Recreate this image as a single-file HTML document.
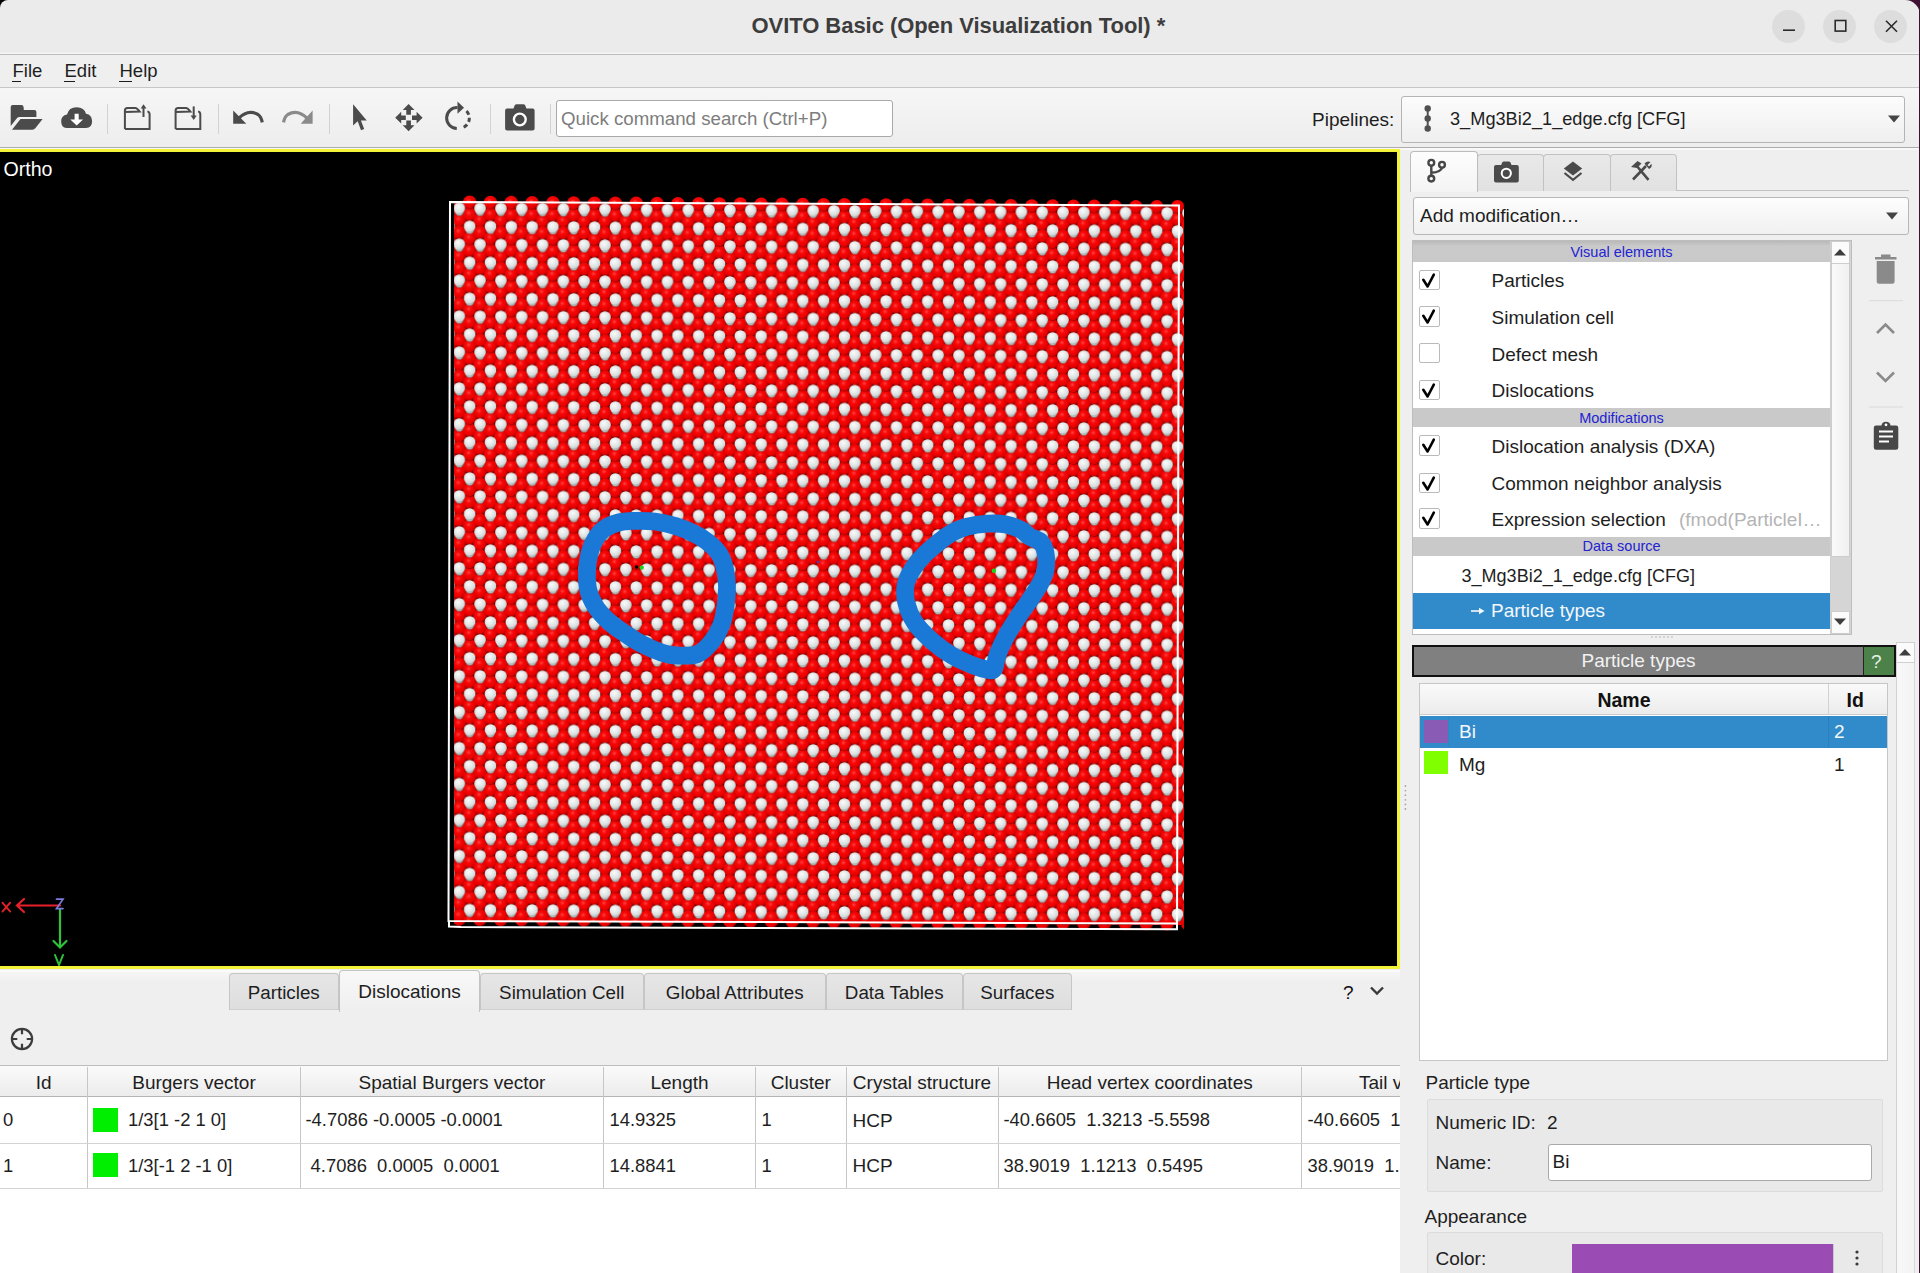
<!DOCTYPE html>
<html><head><meta charset="utf-8">
<style>
*{box-sizing:border-box;margin:0;padding:0}
html,body{width:1920px;height:1273px;overflow:hidden;background:#efefef;font-family:"Liberation Sans",sans-serif;color:#1a1a1a;font-size:19px}
.a{position:absolute}
.t{position:absolute;white-space:pre;line-height:1}
#titlebar{left:0;top:0;width:1920px;height:55px;background:#ebebeb;border-bottom:1.5px solid #bdbdbd;box-shadow:inset 0 -3px 0 -1.5px #f4f4f4}
#menubar{left:0;top:55px;width:1920px;height:33px;background:#efefef;border-bottom:1.2px solid #c6c6c6}
#toolbar{left:0;top:88px;width:1920px;height:59.5px;background:linear-gradient(#f6f6f6,#ededed);border-bottom:1.5px solid #adadad}
#viewport{left:-3px;top:149.3px;width:1403px;height:820px;background:#000;border:3px solid #f3f33a}
.wbtn{position:absolute;top:10px;width:33px;height:33px;border-radius:50%;background:#dddddd}
</style></head><body>
<!-- corners -->
<div class="a" style="left:0;top:0;width:14px;height:14px;background:#000"></div>
<div class="a" style="right:0;top:0;width:16px;height:16px;background:#3f1233"></div>
<div class="a" id="titlebar" style="border-top-left-radius:8px;border-top-right-radius:15px"></div>
<div class="t" style="left:751.5px;top:15.3px;font-size:22px;font-weight:bold;color:#3d3d3d;letter-spacing:-0.05px">OVITO Basic (Open Visualization Tool) *</div>
<div class="wbtn" style="left:1772px"></div>
<div class="wbtn" style="left:1823px"></div>
<div class="wbtn" style="left:1874px"></div>
<svg class="a" style="left:1770px;top:8px" width="140" height="40" viewBox="1770 8 140 40">
<path d="M1783,30.2 H1795" stroke="#2a2a2a" stroke-width="1.6"/>
<rect x="1835.2" y="20.5" width="10.6" height="10.6" fill="none" stroke="#2a2a2a" stroke-width="1.6"/>
<path d="M1886,20.7 L1897,31.7 M1897,20.7 L1886,31.7" stroke="#2a2a2a" stroke-width="1.6"/>
</svg>

<div class="a" id="menubar"></div>
<div class="t" style="left:12.5px;top:61.5px;font-size:18.5px;color:#1e1e1e">File</div>
<div class="t" style="left:64.5px;top:61.5px;font-size:18.5px;color:#1e1e1e">Edit</div>
<div class="t" style="left:119.5px;top:61.5px;font-size:18.5px;color:#1e1e1e">Help</div>
<div class="a" style="left:11.5px;top:80.5px;width:9px;height:1.6px;background:#1e1e1e"></div>
<div class="a" style="left:63.5px;top:80.5px;width:11px;height:1.6px;background:#1e1e1e"></div>
<div class="a" style="left:119px;top:80.5px;width:13px;height:1.6px;background:#1e1e1e"></div>
<div class="a" id="toolbar"></div>
<div class="a" style="left:0;top:147.5px;width:1920px;height:2px;background:#f8f8f8"></div>
<!--TB-->
<svg class="a" style="left:0;top:88px" width="1920" height="60" viewBox="0 88 1920 60">
<g fill="#4b4b4b">
<!-- open folder -->
<path d="M10.7,107 Q10.7,105 12.7,105 L21.5,105 Q23.3,105 23.6,107 L23.8,110 L34.4,110 Q36.4,110 36.4,112 L36.4,117 L19,117 Q17.5,117 16.7,118.5 L10.7,126 Z"/>
<path d="M20.5,119 L42.6,119 L35.5,128 Q34.2,129.7 32.3,129.7 L12,129.7 Z"/>
<!-- cloud -->
<path d="M66.5,127.9 Q61.2,127.9 61.2,121.5 Q61.2,115.5 67,114.6 Q68.7,107.2 76.7,107.2 Q84.3,107.2 86,113.8 Q92.1,114.8 92.1,121.3 Q92.1,127.9 86,127.9 Z"/>
</g>
<path d="M74.6,113.8 L78.7,113.8 L78.7,119.6 L83,119.6 L76.7,125.4 L70.3,119.6 L74.6,119.6 Z" fill="#fff"/>
<g stroke="#d2d2d2" stroke-width="1"><path d="M107.5,104 V134 M218.5,104 V134 M329.5,104 V134 M490.5,104 V134 M550.5,104 V134"/></g>
<g fill="none" stroke="#4b4b4b" stroke-width="2">
<path d="M124.9,128.9 V110.5 Q124.9,107.9 127.5,107.9 L135.3,107.9 Q137,108 139.7,111.6 L124.9,111.9 M147.4,111.4 Q149.6,112 149.6,114.3 V128.9 H124.9"/>
<path d="M143.5,117 V107"/>
<path d="M175.6,128.9 V110.5 Q175.6,107.9 178.2,107.9 L186,107.9 Q187.7,108 190.4,111.6 L175.6,111.9 M198.1,111.4 Q200.3,112 200.3,114.3 V128.9 H175.6"/>
<path d="M193.7,106.4 V116.5"/>
</g>
<g fill="#4b4b4b">
<path d="M140.7,108.6 L143.5,104.2 L146.5,108.6 Z"/>
<path d="M190.6,115.4 L193.7,119.9 L196.7,115.4 Z"/>
<!-- undo -->
<path d="M233.2,110.4 L233.2,123.7 L246.3,123.7 Z"/>
</g>
<path d="M238.5,118.5 Q248,109 258,114.5 Q261,116.5 262.3,122.3" fill="none" stroke="#4b4b4b" stroke-width="3.2"/>
<path d="M312.6,110.4 L312.6,123.7 L300.7,123.7 Z" fill="#8a8a8a"/>
<path d="M307.3,118.5 Q297.8,109 287.8,114.5 Q284.8,116.5 283.5,122.3" fill="none" stroke="#8a8a8a" stroke-width="3.2"/>
<g fill="#4b4b4b">
<!-- pointer -->
<path d="M353.1,104.3 L353.1,125.4 L357.7,121.2 L361,130.3 L364.2,129.1 L360.9,120.5 L366.8,120.5 Z"/>
<!-- move -->
<path d="M408.6,104 L402.7,110 L406.3,110 L406.3,114.8 L410.9,114.8 L410.9,110 L414.5,110 Z"/>
<path d="M408.6,131.2 L402.7,125.2 L406.3,125.2 L406.3,120.6 L410.9,120.6 L410.9,125.2 L414.5,125.2 Z"/>
<path d="M395.2,117.7 L401.2,111.8 L401.2,115.4 L405.8,115.4 L405.8,120 L401.2,120 L401.2,123.6 Z"/>
<path d="M422.6,117.7 L416.6,111.8 L416.6,115.4 L412,115.4 L412,120 L416.6,120 L416.6,123.6 Z"/>
<!-- rotate head -->
<path d="M457.5,101.5 L464,107.7 L457.5,113.8 Z"/>
</g>
<path d="M457.5,107.5 A10.3,10.3 0 1 0 456.8,128.5" fill="none" stroke="#4b4b4b" stroke-width="3"/>
<path d="M466.5,111 A10.3,10.3 0 0 1 461,128.2" fill="none" stroke="#4b4b4b" stroke-width="3" stroke-dasharray="4.3 3"/>
<!-- camera -->
<path d="M507.1,108.4 L513.5,108.4 L514.6,105.6 Q515.2,104.3 516.8,104.3 L523.2,104.3 Q524.7,104.3 525.3,105.6 L526.4,108.4 L532.6,108.4 Q534.6,108.4 534.6,110.4 L534.6,128.4 Q534.6,130.4 532.6,130.4 L507.1,130.4 Q505.1,130.4 505.1,128.4 L505.1,110.4 Q505.1,108.4 507.1,108.4 Z" fill="#4b4b4b"/>
<circle cx="519.8" cy="119.5" r="5.9" fill="none" stroke="#fff" stroke-width="2.4"/>
</svg>
<div class="a" style="left:556px;top:99.5px;width:337px;height:37px;background:#fff;border:1px solid #a9a9a9;border-radius:3px"></div>
<div class="t" style="left:561px;top:109.5px;font-size:18.7px;color:#7d7d7d">Quick command search (Ctrl+P)</div>
<div class="t" style="left:1312px;top:110px;font-size:19px;color:#1e1e1e;letter-spacing:0px">Pipelines:</div>
<div class="a" style="left:1401px;top:95.5px;width:504px;height:47px;background:linear-gradient(#fcfcfc,#efefef);border:1px solid #b4b4b4;border-radius:3px"></div>
<svg class="a" style="left:1420px;top:104px" width="16" height="30"><circle cx="7.7" cy="4.5" r="3.2" fill="#505050"/><circle cx="7.7" cy="14.5" r="3.2" fill="#505050"/><circle cx="7.7" cy="24.5" r="3.2" fill="#505050"/><path d="M7.7,5 V24" stroke="#505050" stroke-width="2"/></svg>
<div class="t" style="left:1450px;top:110px;font-size:18.2px;color:#1e1e1e">3_Mg3Bi2_1_edge.cfg [CFG]</div>
<svg class="a" style="left:1887px;top:114px" width="14" height="10"><path d="M1,1.5 H13 L7,8.5 Z" fill="#444"/></svg>
<!--/TB-->
<div class="a" id="viewport"></div>
<!--VP-->
<svg class="a" style="left:0;top:0" width="1400" height="970" viewBox="0 0 1400 970">
<defs>
<radialGradient id="gr" cx="0.42" cy="0.4" r="0.62">
<stop offset="0" stop-color="#ff4444"/><stop offset="0.3" stop-color="#f80808"/><stop offset="0.75" stop-color="#e40000"/><stop offset="0.9" stop-color="#b00000"/><stop offset="1" stop-color="#6a0000"/>
</radialGradient>
<radialGradient id="gw" cx="0.4" cy="0.36" r="0.68">
<stop offset="0" stop-color="#fbfbfb"/><stop offset="0.5" stop-color="#e4e8e8"/><stop offset="0.86" stop-color="#cfd6d6"/><stop offset="1" stop-color="#8d9393"/>
</radialGradient>
<g id="rs"><circle r="6.8" fill="url(#gr)"/></g>
<g id="ws"><circle cy="3.4" r="4.0" fill="#b9c2c2" stroke="#7a4a4a" stroke-width="0.6"/><circle r="5.85" fill="url(#gw)"/></g>
<pattern id="lat" patternUnits="userSpaceOnUse" width="20.82" height="35.96" x="459.3" y="205.33" patternTransform="skewY(0.37)">
<rect width="20.82" height="35.96" fill="#6e0000"/>
<use href="#rs" x="0.00" y="11.99"/>
<use href="#rs" x="0.00" y="23.97"/>
<use href="#rs" x="10.41" y="5.99"/>
<use href="#rs" x="10.41" y="29.97"/>
<use href="#rs" x="20.82" y="11.99"/>
<use href="#rs" x="20.82" y="23.97"/>
<use href="#rs" x="10.41" y="41.95"/>
<use href="#rs" x="10.41" y="-5.99"/>
<use href="#rs" x="0.00" y="-11.99"/>
<use href="#rs" x="20.82" y="-11.99"/>
<use href="#rs" x="0.00" y="47.95"/>
<use href="#rs" x="20.82" y="47.95"/>
<use href="#ws" x="0.00" y="0.00"/>
<use href="#ws" x="20.82" y="0.00"/>
<use href="#ws" x="0.00" y="35.96"/>
<use href="#ws" x="20.82" y="35.96"/>
<use href="#ws" x="10.41" y="17.98"/>
</pattern>
</defs>
<clipPath id="topc"><path d="M455,180 L1184,180 L1184,206.5 L455,202.3 Z"/></clipPath>
<g clip-path="url(#topc)"><use href="#rs" x="469.7" y="202.4"/><use href="#rs" x="490.5" y="202.5"/><use href="#rs" x="511.3" y="202.6"/><use href="#rs" x="532.2" y="202.8"/><use href="#rs" x="553.0" y="202.9"/><use href="#rs" x="573.8" y="203.0"/><use href="#rs" x="594.6" y="203.2"/><use href="#rs" x="615.4" y="203.3"/><use href="#rs" x="636.3" y="203.4"/><use href="#rs" x="657.1" y="203.6"/><use href="#rs" x="677.9" y="203.7"/><use href="#rs" x="698.7" y="203.8"/><use href="#rs" x="719.5" y="204.0"/><use href="#rs" x="740.4" y="204.1"/><use href="#rs" x="761.2" y="204.3"/><use href="#rs" x="782.0" y="204.4"/><use href="#rs" x="802.8" y="204.5"/><use href="#rs" x="823.6" y="204.7"/><use href="#rs" x="844.5" y="204.8"/><use href="#rs" x="865.3" y="204.9"/><use href="#rs" x="886.1" y="205.1"/><use href="#rs" x="906.9" y="205.2"/><use href="#rs" x="927.7" y="205.3"/><use href="#rs" x="948.6" y="205.5"/><use href="#rs" x="969.4" y="205.6"/><use href="#rs" x="990.2" y="205.7"/><use href="#rs" x="1011.0" y="205.9"/><use href="#rs" x="1031.8" y="206.0"/><use href="#rs" x="1052.7" y="206.1"/><use href="#rs" x="1073.5" y="206.3"/><use href="#rs" x="1094.3" y="206.4"/><use href="#rs" x="1115.1" y="206.5"/><use href="#rs" x="1135.9" y="206.7"/><use href="#rs" x="1156.8" y="206.8"/><use href="#rs" x="1177.6" y="206.9"/></g>
<clipPath id="botc"><path d="M454,921 L1184,925 L1184,940 L454,940 Z"/></clipPath>
<g clip-path="url(#botc)"><use href="#rs" x="459.3" y="919.3"/><use href="#rs" x="480.1" y="919.4"/><use href="#rs" x="500.9" y="919.6"/><use href="#rs" x="521.8" y="919.7"/><use href="#rs" x="542.6" y="919.8"/><use href="#rs" x="563.4" y="920.0"/><use href="#rs" x="584.2" y="920.1"/><use href="#rs" x="605.0" y="920.2"/><use href="#rs" x="625.9" y="920.4"/><use href="#rs" x="646.7" y="920.5"/><use href="#rs" x="667.5" y="920.6"/><use href="#rs" x="688.3" y="920.8"/><use href="#rs" x="709.1" y="920.9"/><use href="#rs" x="730.0" y="921.0"/><use href="#rs" x="750.8" y="921.2"/><use href="#rs" x="771.6" y="921.3"/><use href="#rs" x="792.4" y="921.5"/><use href="#rs" x="813.2" y="921.6"/><use href="#rs" x="834.1" y="921.7"/><use href="#rs" x="854.9" y="921.9"/><use href="#rs" x="875.7" y="922.0"/><use href="#rs" x="896.5" y="922.1"/><use href="#rs" x="917.3" y="922.3"/><use href="#rs" x="938.2" y="922.4"/><use href="#rs" x="959.0" y="922.5"/><use href="#rs" x="979.8" y="922.7"/><use href="#rs" x="1000.6" y="922.8"/><use href="#rs" x="1021.4" y="922.9"/><use href="#rs" x="1042.3" y="923.1"/><use href="#rs" x="1063.1" y="923.2"/><use href="#rs" x="1083.9" y="923.3"/><use href="#rs" x="1104.7" y="923.5"/><use href="#rs" x="1125.5" y="923.6"/><use href="#rs" x="1146.4" y="923.7"/><use href="#rs" x="1167.2" y="923.9"/><use href="#rs" x="1188.0" y="924.0"/></g>
<path d="M454,201.8 L1184,206 L1184,925 L454,921 Z" fill="url(#lat)"/>
<g fill="none" stroke="#fff" stroke-width="2">
<path d="M450,202 L1179,205.5 L1177,923.5 L448.5,921 Z"/>
<path d="M449,921 L449,926.5 L461,927 L1177,929.2 L1177,923.5"/>
</g>
<g fill="none" stroke="#1a78d6" stroke-width="17.8" stroke-linejoin="round">
<path d="M634.3,520.9 C640.4,520.7 647.8,520.6 654.8,521.5 C661.8,522.4 669.6,524.2 676.1,526.2 C682.6,528.2 688.5,530.6 693.7,533.2 C698.9,535.8 703.0,538.3 707.2,541.7 C711.5,545.1 716.2,549.2 719.2,553.7 C722.2,558.2 723.6,563.2 724.9,568.6 C726.2,574.0 726.9,579.9 727.0,586.3 C727.1,592.7 726.5,600.3 725.5,606.8 C724.5,613.3 723.6,619.2 721.3,625.1 C718.9,631.0 715.4,637.3 711.4,642.1 C707.4,646.9 702.9,651.9 697.3,654.1 C691.6,656.3 683.4,655.7 677.5,655.5 C671.6,655.3 667.8,654.6 661.9,652.7 C656.0,650.8 648.2,647.4 642.1,644.2 C636.0,641.0 630.6,637.4 625.1,633.6 C619.6,629.8 613.7,626.0 608.9,621.6 C604.1,617.2 599.6,612.7 596.2,607.5 C592.8,602.3 589.9,596.6 588.4,590.5 C586.9,584.4 586.8,577.1 587.0,570.7 C587.2,564.3 588.4,557.6 589.8,552.3 C591.2,547.0 593.1,542.8 595.5,538.9 C597.9,535.0 600.1,531.7 603.9,529.0 C607.7,526.3 613.0,524.0 618.1,522.6 C623.2,521.2 628.2,521.1 634.3,520.9Z"/>
<path d="M966.4,526.9 C972.3,525.4 981.0,524.1 987.6,523.7 C994.2,523.3 1000.5,523.4 1006.0,524.4 C1011.5,525.4 1016.8,527.6 1020.8,529.7 C1024.8,531.8 1026.7,534.8 1030.0,536.8 C1033.3,538.8 1038.0,539.1 1040.6,541.8 C1043.2,544.5 1044.7,548.4 1045.5,553.1 C1046.3,557.8 1046.4,564.8 1045.5,570.0 C1044.6,575.2 1042.5,579.2 1039.9,584.2 C1037.3,589.2 1033.8,594.1 1030.0,599.7 C1026.2,605.4 1021.3,612.0 1017.3,618.1 C1013.3,624.2 1009.3,630.4 1006.0,636.5 C1002.7,642.6 999.5,649.5 997.5,654.9 C995.5,660.3 995.5,666.5 993.9,669.0 C992.2,671.5 991.0,670.3 987.6,669.7 C984.2,669.1 979.3,667.9 973.4,665.5 C967.5,663.1 959.2,659.7 952.2,655.6 C945.2,651.5 938.0,646.2 931.7,640.7 C925.5,635.2 918.9,628.8 914.7,622.4 C910.5,616.0 907.8,608.7 906.3,602.6 C904.8,596.5 904.8,590.8 905.6,585.6 C906.4,580.4 908.2,576.6 911.2,571.5 C914.2,566.4 919.0,560.4 923.9,555.2 C928.8,550.0 936.2,544.2 940.9,540.4 C945.6,536.6 948.0,534.9 952.2,532.6 C956.5,530.4 960.5,528.4 966.4,526.9Z"/>
</g>
<circle cx="641.7" cy="567.6" r="2.2" fill="#19d219"/>
<circle cx="636.5" cy="567" r="1.8" fill="#000"/>
<circle cx="993.9" cy="570.8" r="2.2" fill="#19d219"/>
<circle cx="818" cy="562" r="1.3" fill="#3344cc"/>
<g font-family="Liberation Sans" font-size="19.6" fill="#fff"><text x="3.5" y="175.6">Ortho</text></g>
<g stroke-width="2.2" fill="none" stroke-linecap="round">
<path d="M60,905.5 L17,905.5 M24,899 L17,905.5 L24,912" stroke="#e8202a"/>
<path d="M60,909 L60,947 M53.5,941 L60,947.5 L66.5,941" stroke="#2ec43a"/>
<path d="M2.4,902.6 L10.2,911.6 M10.2,902.6 L2.4,911.6" stroke="#e8202a" stroke-width="1.8"/>
<path d="M56.5,899.2 L63,899.2 L56.5,908.6 L63,908.6" stroke="#7c7ce0" stroke-width="1.7"/>
<path d="M55,955 L59,965 M63,955 L59,965" stroke="#2ec43a" stroke-width="2"/>
</g>
</svg>
<!--/VP-->
<!--BP-->
<div class="a" style="left:0;top:969.5px;width:1400px;height:2px;background:#fafafa"></div>
<div class="a" style="left:0;top:971.5px;width:1400px;height:10px;background:linear-gradient(#f6f6f6,#efefef)"></div>
<div class="a" style="left:229px;top:973px;width:109.5px;height:36.5px;background:linear-gradient(#e6e6e6,#dedede);border:1px solid #c6c6c6;border-bottom:1px solid #cfcfcf;border-radius:4px 4px 0 0"></div>
<div class="a" style="left:480px;top:973px;width:163.5px;height:36.5px;background:linear-gradient(#e6e6e6,#dedede);border:1px solid #c6c6c6;border-bottom:1px solid #cfcfcf;border-radius:4px 4px 0 0"></div>
<div class="a" style="left:644px;top:973px;width:181.5px;height:36.5px;background:linear-gradient(#e6e6e6,#dedede);border:1px solid #c6c6c6;border-bottom:1px solid #cfcfcf;border-radius:4px 4px 0 0"></div>
<div class="a" style="left:826px;top:973px;width:136.5px;height:36.5px;background:linear-gradient(#e6e6e6,#dedede);border:1px solid #c6c6c6;border-bottom:1px solid #cfcfcf;border-radius:4px 4px 0 0"></div>
<div class="a" style="left:963px;top:973px;width:108.5px;height:36.5px;background:linear-gradient(#e6e6e6,#dedede);border:1px solid #c6c6c6;border-bottom:1px solid #cfcfcf;border-radius:4px 4px 0 0"></div>
<div class="a" style="left:339px;top:970px;width:141px;height:42px;background:linear-gradient(#f8f8f8,#efefef);border:1px solid #c3c3c3;border-bottom:none;border-radius:4px 4px 0 0"></div>
<div class="t" style="left:229px;width:109.5px;text-align:center;top:984.1px;font-size:18.8px;color:#1e1e1e;">Particles</div>
<div class="t" style="left:480px;width:163.5px;text-align:center;top:984.1px;font-size:18.8px;color:#1e1e1e;">Simulation Cell</div>
<div class="t" style="left:644px;width:181.5px;text-align:center;top:984.1px;font-size:18.8px;color:#1e1e1e;">Global Attributes</div>
<div class="t" style="left:826px;width:136.5px;text-align:center;top:984.1px;font-size:18.8px;color:#1e1e1e;">Data Tables</div>
<div class="t" style="left:963px;width:108.5px;text-align:center;top:984.1px;font-size:18.8px;color:#1e1e1e;">Surfaces</div>
<div class="t" style="left:339px;width:141px;text-align:center;top:982.4px;font-size:19px;color:#1e1e1e;">Dislocations</div>
<div class="t" style="left:1343px;top:982.9px;font-size:19px;color:#111;">?</div>
<svg class="a" style="left:1368px;top:984px" width="18" height="14"><path d="M3,3.5 L9,9.5 L15,3.5" fill="none" stroke="#3a3a3a" stroke-width="2.4"/></svg>
<svg class="a" style="left:8px;top:1025px" width="28" height="28"><g fill="none" stroke="#3c3c3c" stroke-width="2.2"><circle cx="14" cy="14" r="10.1"/><path d="M14,4 V9.3 M14,18.7 V24 M4,14 H9.3 M18.7,14 H24"/></g></svg>
<div class="a" style="left:0;top:1065px;width:1399.5px;height:208px;background:#fff;border-top:1.2px solid #bdbdbd"></div>
<div class="a" style="left:0;top:1066.2px;width:1399.5px;height:31px;background:linear-gradient(#fbfbfb,#ececec);border-bottom:1.5px solid #b4b4b4"></div>
<div class="a" style="left:87.0px;top:1066.5px;width:1px;height:122.5px;background:#c6c6c6"></div>
<div class="a" style="left:300.0px;top:1066.5px;width:1px;height:122.5px;background:#c6c6c6"></div>
<div class="a" style="left:603.0px;top:1066.5px;width:1px;height:122.5px;background:#c6c6c6"></div>
<div class="a" style="left:755.0px;top:1066.5px;width:1px;height:122.5px;background:#c6c6c6"></div>
<div class="a" style="left:845.5px;top:1066.5px;width:1px;height:122.5px;background:#c6c6c6"></div>
<div class="a" style="left:997.5px;top:1066.5px;width:1px;height:122.5px;background:#c6c6c6"></div>
<div class="a" style="left:1301.0px;top:1066.5px;width:1px;height:122.5px;background:#c6c6c6"></div>
<div class="a" style="left:0;top:1142.5px;width:1399.5px;height:1px;background:#d3d3d3"></div>
<div class="a" style="left:0;top:1188px;width:1399.5px;height:1px;background:#d3d3d3"></div>
<div class="t" style="left:0px;width:87.5px;text-align:center;top:1072.6px;font-size:19px;color:#1e1e1e;">Id</div>
<div class="t" style="left:87.5px;width:213.0px;text-align:center;top:1072.6px;font-size:19px;color:#1e1e1e;">Burgers vector</div>
<div class="t" style="left:300.5px;width:303.0px;text-align:center;top:1072.6px;font-size:19px;color:#1e1e1e;">Spatial Burgers vector</div>
<div class="t" style="left:603.5px;width:152.0px;text-align:center;top:1072.6px;font-size:19px;color:#1e1e1e;">Length</div>
<div class="t" style="left:755.5px;width:90.5px;text-align:center;top:1072.6px;font-size:19px;color:#1e1e1e;">Cluster</div>
<div class="t" style="left:846px;width:152px;text-align:center;top:1072.6px;font-size:19px;color:#1e1e1e;">Crystal structure</div>
<div class="t" style="left:998px;width:303.5px;text-align:center;top:1072.6px;font-size:19px;color:#1e1e1e;">Head vertex coordinates</div>
<div class="a" style="left:1301.5px;top:1066px;width:98px;height:130px;overflow:hidden"><div class="t" style="left:57.5px;top:6.6px;font-size:19px;color:#1e1e1e">Tail vertex</div><div class="t" style="left:6px;top:45.1px;font-size:18.4px;color:#1e1e1e">-40.6605  1.3213</div><div class="t" style="left:6px;top:90.9px;font-size:18.4px;color:#1e1e1e">38.9019  1.1213</div></div>
<div class="t" style="left:3px;top:1111.1px;font-size:18.4px;color:#1e1e1e;">0</div>
<div class="t" style="left:128px;top:1111.1px;font-size:18.4px;color:#1e1e1e;">1/3[1 -2 1 0]</div>
<div class="t" style="left:305.5px;top:1111.1px;font-size:18.4px;color:#1e1e1e;">-4.7086 -0.0005 -0.0001</div>
<div class="t" style="left:609.5px;top:1111.1px;font-size:18.4px;color:#1e1e1e;">14.9325</div>
<div class="t" style="left:761.5px;top:1111.1px;font-size:18.4px;color:#1e1e1e;">1</div>
<div class="t" style="left:852.5px;top:1110.6px;font-size:19px;color:#1e1e1e;">HCP</div>
<div class="t" style="left:1003.5px;top:1111.1px;font-size:18.4px;color:#1e1e1e;">-40.6605  1.3213 -5.5598</div>
<div class="a" style="left:93.3px;top:1107.8px;width:24.5px;height:24px;background:#00ee00"></div>
<div class="t" style="left:3px;top:1156.9px;font-size:18.4px;color:#1e1e1e;">1</div>
<div class="t" style="left:128px;top:1156.9px;font-size:18.4px;color:#1e1e1e;">1/3[-1 2 -1 0]</div>
<div class="t" style="left:305.5px;top:1156.9px;font-size:18.4px;color:#1e1e1e;"> 4.7086  0.0005  0.0001</div>
<div class="t" style="left:609.5px;top:1156.9px;font-size:18.4px;color:#1e1e1e;">14.8841</div>
<div class="t" style="left:761.5px;top:1156.9px;font-size:18.4px;color:#1e1e1e;">1</div>
<div class="t" style="left:852.5px;top:1156.4px;font-size:19px;color:#1e1e1e;">HCP</div>
<div class="t" style="left:1003.5px;top:1156.9px;font-size:18.4px;color:#1e1e1e;">38.9019  1.1213  0.5495</div>
<div class="a" style="left:93.3px;top:1152.8px;width:24.5px;height:24px;background:#00ee00"></div>
<!--/BP-->
<!--RP-->
<div class="a" style="left:1477px;top:190px;width:432px;height:1px;background:#c4c4c4"></div>
<div class="a" style="left:1477px;top:153.5px;width:67px;height:37px;background:linear-gradient(#e9e9e9,#e1e1e1);border:1px solid #c2c2c2;border-bottom:none;border-radius:4px 4px 0 0"></div>
<div class="a" style="left:1543px;top:153.5px;width:68px;height:37px;background:linear-gradient(#e9e9e9,#e1e1e1);border:1px solid #c2c2c2;border-bottom:none;border-radius:4px 4px 0 0"></div>
<div class="a" style="left:1610px;top:153.5px;width:67px;height:37px;background:linear-gradient(#e9e9e9,#e1e1e1);border:1px solid #c2c2c2;border-bottom:none;border-radius:4px 4px 0 0"></div>
<div class="a" style="left:1410px;top:150.5px;width:67.5px;height:41px;background:linear-gradient(#fdfdfd,#f4f4f4);border:1px solid #bcbcbc;border-bottom:none;border-radius:4px 4px 0 0"></div>
<svg class="a" style="left:1400px;top:145px" width="300" height="50" viewBox="1400 145 300 50">
<g fill="none" stroke="#474747" stroke-width="2.4"><circle cx="1431.3" cy="162.8" r="2.9"/><circle cx="1431.3" cy="178.6" r="2.9"/><circle cx="1442" cy="164.8" r="2.9"/><path d="M1431.3,165.7 V175.7 M1431.3,172.8 Q1441,172 1442,167.7"/></g>
<path d="M1496,165 L1501.2,165 L1502.2,162.6 Q1502.7,161.5 1504,161.5 L1508.7,161.5 Q1510,161.5 1510.5,162.6 L1511.5,165 L1516.8,165 Q1518.8,165 1518.8,167 L1518.8,180.5 Q1518.8,182.5 1516.8,182.5 L1496,182.5 Q1494,182.5 1494,180.5 L1494,167 Q1494,165 1496,165 Z" fill="#4a4a4a"/>
<circle cx="1506.3" cy="173.3" r="4.6" fill="none" stroke="#fff" stroke-width="2"/>
<path d="M1573,161.5 L1582.2,168.5 L1573,175.5 L1563.8,168.5 Z" fill="#4a4a4a"/>
<path d="M1564.5,173 L1573,179.8 L1581.5,173" fill="none" stroke="#4a4a4a" stroke-width="2.2"/>
<g stroke="#4a4a4a" stroke-width="2.6" fill="none" stroke-linecap="butt"><path d="M1633,179.5 L1646,166 M1636,165 L1648.5,179.8"/></g>
<path d="M1631,167 L1637.5,161 L1641.5,163.5 L1637,168 Z" fill="#4a4a4a"/>
<path d="M1644.5,163.5 Q1647,160.5 1650.5,162 L1647.5,165 L1649,166.5 L1651.5,163.8 Q1652.5,167.5 1649,169 Z" fill="#4a4a4a"/>
</svg>
<div class="a" style="left:1413px;top:197px;width:496px;height:37.5px;background:linear-gradient(#fdfdfd,#f0f0f0);border:1px solid #b7b7b7;border-radius:3px"></div>
<div class="t" style="left:1420px;top:206.2px;font-size:19px;color:#1e1e1e;">Add modification…</div>
<svg class="a" style="left:1885px;top:211px" width="14" height="10"><path d="M1,1.5 H13 L7,8.5 Z" fill="#444"/></svg>
<div class="a" style="left:1412px;top:240px;width:439.5px;height:394.5px;background:#fff;border:1px solid #bdbdbd"></div>
<div class="a" style="left:1413px;top:240.5px;width:417px;height:21.5px;background:linear-gradient(#b9b9b9,#cacaca 25%,#c9c9c9)"></div>
<div class="t" style="left:1413px;width:417px;text-align:center;top:244.5px;font-size:14.5px;color:#2323d4">Visual elements</div>
<div class="a" style="left:1413px;top:408px;width:417px;height:19px;background:#c9c9c9"></div>
<div class="t" style="left:1413px;width:417px;text-align:center;top:410.5px;font-size:14.5px;color:#2323d4">Modifications</div>
<div class="a" style="left:1413px;top:537px;width:417px;height:19px;background:#c9c9c9"></div>
<div class="t" style="left:1413px;width:417px;text-align:center;top:539.2px;font-size:14.5px;color:#2323d4">Data source</div>
<div class="a" style="left:1418.5px;top:269.7px;width:21px;height:20.5px;border:1.3px solid #bababa;border-radius:2px;background:#fff"></div>
<svg class="a" style="left:1418px;top:269.7px" width="22" height="22"><path d="M5.3,9.8 L9.6,16.5 L15.8,4.6" fill="none" stroke="#000" stroke-width="2.6" stroke-linejoin="round" stroke-linecap="round"/></svg>
<div class="t" style="left:1491.5px;top:271.4px;font-size:19px;color:#1e1e1e;">Particles</div>
<div class="a" style="left:1418.5px;top:306.4px;width:21px;height:20.5px;border:1.3px solid #bababa;border-radius:2px;background:#fff"></div>
<svg class="a" style="left:1418px;top:306.4px" width="22" height="22"><path d="M5.3,9.8 L9.6,16.5 L15.8,4.6" fill="none" stroke="#000" stroke-width="2.6" stroke-linejoin="round" stroke-linecap="round"/></svg>
<div class="t" style="left:1491.5px;top:308.2px;font-size:19px;color:#1e1e1e;">Simulation cell</div>
<div class="a" style="left:1418.5px;top:342.9px;width:21px;height:20.5px;border:1.3px solid #bababa;border-radius:2px;background:#fff"></div>
<div class="t" style="left:1491.5px;top:344.6px;font-size:19px;color:#1e1e1e;">Defect mesh</div>
<div class="a" style="left:1418.5px;top:379.5px;width:21px;height:20.5px;border:1.3px solid #bababa;border-radius:2px;background:#fff"></div>
<svg class="a" style="left:1418px;top:379.5px" width="22" height="22"><path d="M5.3,9.8 L9.6,16.5 L15.8,4.6" fill="none" stroke="#000" stroke-width="2.6" stroke-linejoin="round" stroke-linecap="round"/></svg>
<div class="t" style="left:1491.5px;top:381.1px;font-size:19px;color:#1e1e1e;">Dislocations</div>
<div class="a" style="left:1418.5px;top:435.0px;width:21px;height:20.5px;border:1.3px solid #bababa;border-radius:2px;background:#fff"></div>
<svg class="a" style="left:1418px;top:435.0px" width="22" height="22"><path d="M5.3,9.8 L9.6,16.5 L15.8,4.6" fill="none" stroke="#000" stroke-width="2.6" stroke-linejoin="round" stroke-linecap="round"/></svg>
<div class="t" style="left:1491.5px;top:436.7px;font-size:19px;color:#1e1e1e;">Dislocation analysis (DXA)</div>
<div class="a" style="left:1418.5px;top:472.5px;width:21px;height:20.5px;border:1.3px solid #bababa;border-radius:2px;background:#fff"></div>
<svg class="a" style="left:1418px;top:472.5px" width="22" height="22"><path d="M5.3,9.8 L9.6,16.5 L15.8,4.6" fill="none" stroke="#000" stroke-width="2.6" stroke-linejoin="round" stroke-linecap="round"/></svg>
<div class="t" style="left:1491.5px;top:474.0px;font-size:19px;color:#1e1e1e;">Common neighbor analysis</div>
<div class="a" style="left:1418.5px;top:508.3px;width:21px;height:20.5px;border:1.3px solid #bababa;border-radius:2px;background:#fff"></div>
<svg class="a" style="left:1418px;top:508.3px" width="22" height="22"><path d="M5.3,9.8 L9.6,16.5 L15.8,4.6" fill="none" stroke="#000" stroke-width="2.6" stroke-linejoin="round" stroke-linecap="round"/></svg>
<div class="t" style="left:1491.5px;top:510.0px;font-size:19px;color:#1e1e1e;">Expression selection</div>
<div class="t" style="left:1679px;top:510.0px;font-size:19px;color:#b4b4b4;">(fmod(ParticleI…</div>
<div class="t" style="left:1461.5px;top:567px;font-size:18.05px;color:#1e1e1e;">3_Mg3Bi2_1_edge.cfg [CFG]</div>
<div class="a" style="left:1413px;top:592.5px;width:417px;height:36.5px;background:#318bcb"></div>
<div class="t" style="left:1491px;top:601.3px;font-size:19px;color:#f4f8fc;">Particle types</div><svg class="a" style="left:1470px;top:606px" width="16" height="10"><path d="M1,5 H12" stroke="#f4f8fc" stroke-width="1.6"/><path d="M9,1.8 L14.5,5 L9,8.2 Z" fill="#f4f8fc"/></svg>
<div class="a" style="left:1830px;top:241px;width:20.5px;height:392.5px;background:#d5d5d5;border-left:1px solid #d0d0d0"></div>
<div class="a" style="left:1830.5px;top:241px;width:19.5px;height:316px;background:linear-gradient(90deg,#fafafa,#f0f0f0);border:1px solid #cdcdcd"></div>
<div class="a" style="left:1830.5px;top:241px;width:19.5px;height:23px;background:#fbfbfb;border:1px solid #cdcdcd"></div>
<div class="a" style="left:1830.5px;top:611px;width:19.5px;height:22.5px;background:#fbfbfb;border:1px solid #cdcdcd"></div>
<svg class="a" style="left:1833px;top:246px" width="14" height="12"><path d="M1,9.5 H13 L7,3 Z" fill="#3e3e3e"/></svg>
<svg class="a" style="left:1833px;top:616px" width="14" height="12"><path d="M1,2.5 H13 L7,9 Z" fill="#3e3e3e"/></svg>
<svg class="a" style="left:1860px;top:245px" width="50" height="215" viewBox="1860 245 50 215">
<path d="M1875,257 H1896.5 V259.5 H1875 Z M1881,254.5 H1890.5 V257 H1881 Z" fill="#8a8a8a"/>
<path d="M1876.7,261 H1894.6 V281.5 Q1894.6,283.8 1892.3,283.8 H1879 Q1876.7,283.8 1876.7,281.5 Z" fill="#8a8a8a"/>
<path d="M1869,300.7 H1903 M1869,407 H1903" stroke="#dadada" stroke-width="1"/>
<path d="M1877,333 L1885.5,324.5 L1894,333 M1877,372.5 L1885.5,381 L1894,372.5" fill="none" stroke="#8a8a8a" stroke-width="2.6"/>
<path d="M1876,425.5 H1881.5 Q1882,421.8 1886,421.8 Q1890,421.8 1890.5,425.5 H1896 Q1898.3,425.5 1898.3,427.8 V447.5 Q1898.3,449.8 1896,449.8 H1876 Q1873.8,449.8 1873.8,447.5 V427.8 Q1873.8,425.5 1876,425.5 Z" fill="#474747"/>
<circle cx="1886" cy="424.8" r="1.4" fill="#fff"/>
<path d="M1879,431.5 H1893 M1879,436.5 H1893 M1879,441.5 H1889" stroke="#fff" stroke-width="2.2"/>
</svg>
<svg class="a" style="left:1650px;top:635px" width="30" height="5"><g fill="#b0b0b0"><circle cx="2" cy="2" r="0.8"/><circle cx="6" cy="2" r="0.8"/><circle cx="10" cy="2" r="0.8"/><circle cx="14" cy="2" r="0.8"/><circle cx="18" cy="2" r="0.8"/><circle cx="22" cy="2" r="0.8"/></g></svg>
<div class="a" style="left:1412px;top:644.5px;width:483.5px;height:32px;background:#808080;border:2px solid #111"></div>
<div class="a" style="left:1863px;top:644.5px;width:32.5px;height:32px;background:#4c824a;border:2px solid #111;border-left:1.5px solid #222"></div>
<div class="t" style="left:1414px;width:449px;text-align:center;top:650.9px;font-size:19px;color:#f2f2f2">Particle types</div>
<div class="t" style="left:1871px;top:651.9px;font-size:19px;color:#e6f0e6">?</div>
<div class="a" style="left:1895.5px;top:642px;width:19px;height:631px;background:linear-gradient(90deg,#f8f8f8,#f3f3f3);border-left:1px solid #d2d2d2;border-right:1px solid #d8d8d8"></div>
<div class="a" style="left:1895.5px;top:642px;width:19px;height:21px;background:#fbfbfb;border:1px solid #d0d0d0"></div>
<svg class="a" style="left:1898px;top:646px" width="14" height="12"><path d="M1,9.5 H13 L7,3 Z" fill="#3e3e3e"/></svg>
<div class="a" style="left:1418.5px;top:682.5px;width:469.5px;height:378px;background:#fff;border:1px solid #c6c6c6"></div>
<div class="a" style="left:1419.5px;top:683.5px;width:467.5px;height:31px;background:linear-gradient(#fafafa,#ececec);border-bottom:1px solid #cbcbcb"></div>
<div class="a" style="left:1827.5px;top:683.5px;width:1px;height:31px;background:#d2d2d2"></div>
<div class="t" style="left:1420px;width:408px;text-align:center;top:690.5px;font-size:19.5px;font-weight:bold;color:#111">Name</div>
<div class="t" style="left:1846.5px;top:690.5px;font-size:19.5px;color:#111;font-weight:bold">Id</div>
<div class="a" style="left:1419.5px;top:716px;width:467.5px;height:31.5px;background:#318bcb"></div>
<div class="a" style="left:1827.5px;top:716px;width:1px;height:31.5px;background:#2a7fbd"></div>
<div class="a" style="left:1448px;top:716px;width:1px;height:31.5px;background:#2f86c4"></div>
<div class="a" style="left:1424px;top:719.5px;width:24px;height:23.5px;background:#8a5bb4"></div>
<div class="a" style="left:1424px;top:750.8px;width:24px;height:23.5px;background:#80ff00"></div>
<div class="t" style="left:1459px;top:722.1px;font-size:19px;color:#f4f8fc;">Bi</div>
<div class="t" style="left:1459px;top:754.6px;font-size:19px;color:#1e1e1e;">Mg</div>
<div class="t" style="left:1834px;top:722.1px;font-size:19px;color:#f4f8fc;">2</div>
<div class="t" style="left:1834px;top:754.6px;font-size:19px;color:#1e1e1e;">1</div>
<div class="t" style="left:1425.5px;top:1073.3px;font-size:19px;color:#1e1e1e;">Particle type</div>
<div class="a" style="left:1426.5px;top:1098.5px;width:456px;height:93.5px;background:#e9e9e9;border:1px solid #dcdcdc;border-radius:2px"></div>
<div class="t" style="left:1435.5px;top:1112.7px;font-size:19px;color:#1e1e1e;">Numeric ID:</div>
<div class="t" style="left:1547px;top:1112.7px;font-size:19px;color:#1e1e1e;">2</div>
<div class="t" style="left:1435.5px;top:1152.9px;font-size:19px;color:#1e1e1e;">Name:</div>
<div class="a" style="left:1548px;top:1144.3px;width:323.5px;height:37px;background:#fff;border:1px solid #a9a9a9;border-radius:3px"></div>
<div class="t" style="left:1552.5px;top:1152.4px;font-size:19px;color:#1e1e1e;">Bi</div>
<div class="t" style="left:1424.5px;top:1206.9px;font-size:19px;color:#1e1e1e;">Appearance</div>
<div class="a" style="left:1426.5px;top:1232px;width:456px;height:60px;background:#e9e9e9;border:1px solid #dcdcdc;border-radius:2px"></div>
<div class="t" style="left:1435.5px;top:1248.9px;font-size:19px;color:#1e1e1e;">Color:</div>
<div class="a" style="left:1572px;top:1244px;width:261.5px;height:40px;background:#9b4bb4;border-right:1px solid #c9c9c9"></div>
<svg class="a" style="left:1852px;top:1249px" width="10" height="20"><g fill="#3a3a3a"><circle cx="5" cy="3" r="1.6"/><circle cx="5" cy="9" r="1.6"/><circle cx="5" cy="15" r="1.6"/></g></svg>
<svg class="a" style="left:1402px;top:782px" width="8" height="32"><g fill="#a8a8a8"><circle cx="3.4" cy="4.0" r="0.9"/><circle cx="3.4" cy="8.6" r="0.9"/><circle cx="3.4" cy="13.2" r="0.9"/><circle cx="3.4" cy="17.8" r="0.9"/><circle cx="3.4" cy="22.4" r="0.9"/><circle cx="3.4" cy="27.0" r="0.9"/></g></svg>
<!--/RP-->
<div class="a" style="right:0;top:0;width:1px;height:1273px;background:#3f1233"></div>
</body></html>
